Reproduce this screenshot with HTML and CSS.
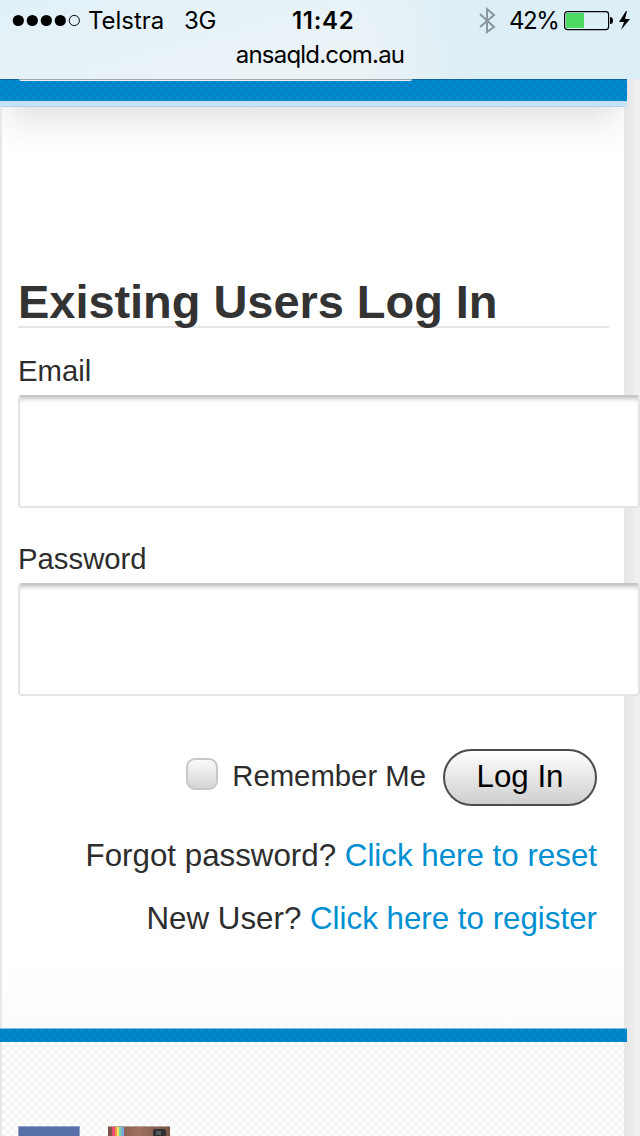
FILE: index.html
```
<!DOCTYPE html>
<html lang="en">
<head>
<meta charset="utf-8">
<title>Existing Users Log In</title>
<link rel="stylesheet" href="styles.css">
</head>
<body>
<header class="browser">
  <div class="status">
    <svg class="signal" width="69" height="14" viewBox="0 0 69 14"><circle cx="6.3" cy="6.5" r="5.6"/><circle cx="20.3" cy="6.5" r="5.6"/><circle cx="34.3" cy="6.5" r="5.6"/><circle cx="48.3" cy="6.5" r="5.6"/><circle cx="62.3" cy="6.5" r="5.1" fill="none" stroke="#000"/></svg>
    <span class="carrier">Telstra</span>
    <span class="network">3G</span>
    <span class="time">11:42</span>
    <svg class="bluetooth" width="17" height="28" viewBox="0 0 17 28" fill="none" stroke="#8b969d" stroke-width="2"><path d="M1 7 15 20 8 25V2l7 6L1 20"/></svg>
    <span class="percent">42%</span>
    <svg class="battery" width="68" height="20" viewBox="0 0 68 20"><rect x=".6" y=".6" width="44" height="18" rx="2.8" fill="none" stroke="#000" stroke-width="1.2"/><path fill="#4cd964" d="M2 2h18v15H2z"/><path d="M46 6q3 0 3 3.5T46 13zM62 0 55 11h5l-3 8 9-11h-5l2-8z"/></svg>
  </div>
  <div class="address">ansaqld.com.au</div>
</header>
<div class="page">
  <div class="band"><div class="panel-edge"></div></div>
  <main class="content">
    <h1>Existing Users Log In</h1>
    <form>
      <label for="email">Email</label>
      <input class="field" id="email" type="email">
      <label for="password">Password</label>
      <input class="field" id="password" type="password">
      <div class="actions">
        <input class="check" id="remember" type="checkbox">
        <label class="remember" for="remember">Remember Me</label>
        <button type="button">Log In</button>
      </div>
      <p class="forgot">Forgot password? <a href="#">Click here to reset</a></p>
      <p class="register">New User? <a href="#">Click here to register</a></p>
    </form>
  </main>
  <div class="divider"></div>
  <footer>
    <div class="facebook"></div>
    <svg class="instagram" width="62" height="10" viewBox="0 0 62 10"><defs><linearGradient id="leather"><stop stop-color="#775244"/><stop offset=".5" stop-color="#a07060"/><stop offset="1" stop-color="#775244"/></linearGradient></defs><path fill="url(#leather)" d="M0 0h62v10H0z"/><path fill="#ee4d73" d="M4 0h3v10H4z"/><path fill="#f49a49" d="M7 0h2v10H7z"/><path fill="#f5e663" d="M9 0h2v10H9z"/><path fill="#75d79c" d="M11 0h2v10h-2z"/><path fill="#77aadf" d="M13 0h3v10h-3z"/><rect x="45" y="3" width="13" height="9" rx="2" fill="#303030"/><path fill="#525960" d="M48 5h5v4h-5z"/><path fill="#b5a298" d="M0 0h62v1H0z"/></svg>
  </footer>
</div>
</body>
</html>
```

FILE: styles.css
```
* { box-sizing: border-box; }
body {
  margin: 0;
  height: 1136px;
  overflow: hidden;
  background: linear-gradient(90deg, #e8e8e8 0 626px, #e8e8e8 629px, #f0f0f0 636px);
  font-family: "Liberation Sans", Arial, sans-serif;
  color: #2d2d2d;
}
.browser {
  height: 79px;
  background: linear-gradient(90deg, transparent 55%, #dceef6 75%), linear-gradient(165deg, #e1f1f8, #eaf3f7 50%, #f0f2f3);
  color: #000;
  font-family: Inter, sans-serif;
}
.status {
  display: flex;
  height: 41px;
  align-items: center;
  font-size: 24px;
  line-height: 30px;
  white-space: nowrap;
}
.signal { margin-left: 12px; flex: none; }
.carrier { width: 96px; margin-left: 7px; letter-spacing: -.05px; }
.network { width: 108px; letter-spacing: -.2px; }
.time { width: 187px; font-weight: 600; letter-spacing: .7px; }
.bluetooth { flex: none; }
.percent { width: 55px; margin-left: 13px; letter-spacing: -1.4px; }
.battery { flex: none; }
.address { text-align: center; font-size: 24px; line-height: 28px; letter-spacing: -.8px; }
.page { width: 627px; }
.band {
  height: 28px;
  padding-left: 19px;
  border-top: 1px solid #07669c;
  border-bottom: 6px solid #c7e1f6;
  background: repeating-conic-gradient(#0083c6 0 25%, #008bd0 0 50%) 0 0 / 8px 8px;
}
.panel-edge {
  width: 393px;
  height: 2px;
  margin-top: -1px;
  background: #f2eee8;
  border-top: 1px solid #9aabb3;
  border-radius: 0 0 3px 3px;
}
.content {
  width: 622px;
  height: 922px;
  margin: -1px 0 0 2px;
  padding: 167px 16px 0;
  border-top: 1px solid #a9d5f2;
  background:
    linear-gradient(90deg, #fff9, #fff0 30px, #fff0 592px, #fff9) 0 0 / 100% 50px no-repeat,
    linear-gradient(#e6e6e6, #f1f1f1 14px, #fafafa 30px, #fff 48px, #fff 850px, #fcfcfc);
}
h1 {
  width: 591px;
  height: 54px;
  margin: 0 0 27px;
  border-bottom: 2px solid #e4e4e4;
  font-size: 47px;
  line-height: 56px;
  letter-spacing: -.05px;
  color: #333;
  white-space: nowrap;
}
label { display: block; height: 40px; font-size: 29.3px; line-height: 31px; }
.field {
  display: block;
  width: 622px;
  height: 113px;
  margin: 0 0 35px;
  border: 2px solid #e4e4e4;
  border-top-color: #c6c6c6;
  border-radius: 4px;
  background: #fff;
  box-shadow: inset 0 5px 4px -3px #c4c4c4;
  outline: 0;
}
.actions {
  display: flex;
  width: 579px;
  height: 57px;
  margin-top: 53px;
  align-items: center;
  justify-content: flex-end;
}
.check {
  appearance: none;
  width: 32px;
  height: 32px;
  margin: 0 14px 7px 0;
  border: 2px solid #c8c8c8;
  border-radius: 9px;
  background: linear-gradient(#fafafa, #d5d5d5);
}
.remember { height: auto; margin: 0 17px 3px 0; line-height: 34px; }
button {
  width: 154px;
  height: 57px;
  padding: 0 0 1px;
  border: 2px solid #4c4c4c;
  border-radius: 29px;
  background: linear-gradient(#fff, #cecece);
  color: #000;
  font: 31.3px/48px "Liberation Sans", Arial, sans-serif;
}
p {
  width: 579px;
  margin: 0;
  text-align: right;
  font-size: 31.3px;
  line-height: 36px;
  white-space: nowrap;
}
.forgot { margin-top: 32px; }
.register { margin-top: 27px; }
a { color: #008fd2; text-decoration: none; }
.divider {
  height: 14px;
  border-top: 1px solid #7bc2e8;
  background: repeating-conic-gradient(#0083c6 0 25%, #0088cb 0 50%) 0 0 / 8px 8px;
}
footer {
  display: flex;
  gap: 28px;
  width: 622px;
  height: 94px;
  margin-left: 2px;
  padding: 84px 16px 0;
  background: repeating-conic-gradient(#f5f5f5 0 25%, #fff 0 50%) 0 0 / 8px 8px;
}
.facebook { width: 62px; height: 10px; border: 1px solid #93a2c9; border-bottom: 0; background: #5870a8; }
```
